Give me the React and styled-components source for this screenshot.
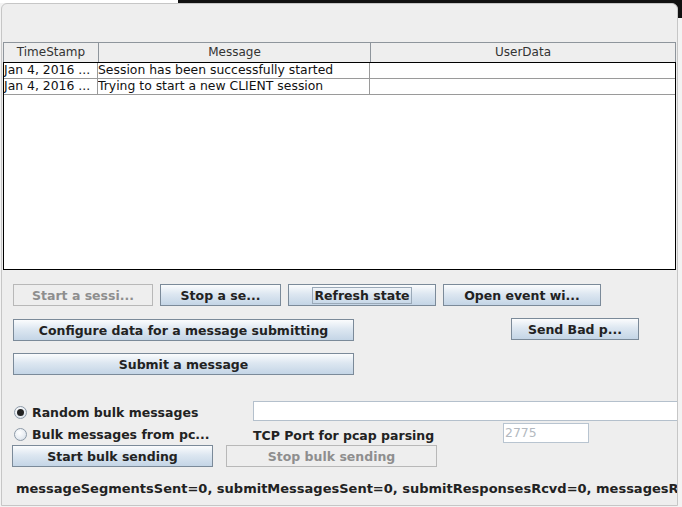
import React from "react"
import styled, { createGlobalStyle } from "styled-components"

const GlobalStyle = createGlobalStyle`
  html, body {
    margin: 0;
    padding: 0;
    background: #f2f2f2;
  }
  body {
    font-family: "DejaVu Sans", "Liberation Sans", sans-serif;
  }
`

const Desktop = styled.div`
  width: 682px;
  height: 507px;
  overflow: hidden;
  box-sizing: border-box;
  padding: 3px 0 0 1px;
  background:
    linear-gradient(#ffffff, #ffffff) 0 0 / 178px 3px no-repeat,
    linear-gradient(#111111, #111111) 178px 0 / 504px 18px no-repeat,
    #f3f3f3;
`

const Window = styled.div`
  width: 677px;
  height: 503px;
  box-sizing: border-box;
  background: #eeeeee;
  border: 1px solid #c6c6c6;
  border-radius: 6px 6px 0 0;
  padding: 38px 0 0 1px;
  overflow: hidden;
  color: #222;
`

const TableBox = styled.div`
  width: 673px;
`

const HeaderRow = styled.div`
  display: grid;
  grid-template-columns: 95px 272px 1fr;
  height: 20px;
  box-sizing: border-box;
  border: 1px solid #8e959c;
  border-bottom: none;
  background: #eeeeee;
`

const HeaderCell = styled.div`
  font-size: 12px;
  line-height: 19px;
  text-align: center;
  border-right: ${(p) => (p.$last ? "none" : "1px solid #8e959c")};
  color: #333;
`

const Body = styled.div`
  height: 208px;
  box-sizing: border-box;
  border: 1px solid #000;
  background: #ffffff;
`

const Row = styled.div`
  display: grid;
  grid-template-columns: 94px 272px 1fr;
  height: 16px;
  box-sizing: border-box;
  border-bottom: 1px solid #9a9a9a;
`

const Cell = styled.div`
  font-size: 12.4px;
  line-height: 14px;
  white-space: nowrap;
  overflow: hidden;
  color: #111;
  border-right: ${(p) => (p.$last ? "none" : "1px solid #9a9a9a")};
`

const Controls = styled.div`
  display: flex;
  flex-direction: column;
  padding-left: 10px;
`

const ButtonRow = styled.div`
  display: flex;
  align-items: ${(p) => p.$align ?? "center"};
  gap: ${(p) => p.$gap ?? 7}px;
  margin-top: ${(p) => p.$top ?? 0}px;
`

const Button = styled.button`
  width: ${(p) => p.$w}px;
  height: 22px;
  margin-left: ${(p) => p.$ml ?? 0}px;
  margin-top: ${(p) => p.$mt ?? 0}px;
  padding: 0;
  box-sizing: border-box;
  flex-shrink: 0;
  font-family: "DejaVu Sans", sans-serif;
  font-size: 12.5px;
  font-weight: bold;
  color: #222;
  white-space: nowrap;
  border: 1px solid #7b8a99;
  border-radius: 0;
  background: linear-gradient(#fbfcfd 0%, #dde7f1 45%, #c4d5e6 100%);
  cursor: default;

  &:disabled {
    color: #8e8e8e;
    border-color: #b8b8b8;
    background: #eeeeee;
  }
`

const FocusText = styled.span`
  border: 1px solid #9aa9b8;
  padding: 0 1px;
`

const BulkSection = styled.div`
  display: grid;
  grid-template-columns: 240px 250px 1fr;
  grid-template-rows: 22px 22px;
  align-items: center;
  margin-top: 26px;
`

const RadioLabel = styled.label`
  display: flex;
  align-items: center;
  gap: 5px;
  padding-left: 1px;
  font-size: 12.5px;
  font-weight: bold;
  color: #222;
  white-space: nowrap;
`

const RadioDot = styled.span`
  width: 13px;
  height: 13px;
  border-radius: 50%;
  box-sizing: border-box;
  border: 1px solid #8d9aa8;
  background: radial-gradient(circle at 40% 35%, #ffffff 0%, #e6ebf1 60%, #c9d3dd 100%);
  display: flex;
  align-items: center;
  justify-content: center;

  &::after {
    content: "";
    width: 7px;
    height: 7px;
    border-radius: 50%;
    background: #222;
    display: ${(p) => (p.$on ? "block" : "none")};
  }
`

const TextField = styled.div`
  grid-column: 2 / 4;
  align-self: start;
  height: 20px;
  width: 440px;
  box-sizing: border-box;
  background: #ffffff;
  border: 1px solid #b4c0cc;
  border-right: none;
`

const PortField = styled.div`
  align-self: start;
  width: 86px;
  height: 20px;
  box-sizing: border-box;
  background: #ffffff;
  border: 1px solid #b8c4d0;
  font-size: 12.4px;
  line-height: 18px;
  padding-left: 1px;
  color: #b3b9c0;
`

const FieldLabel = styled.div`
  font-size: 12.5px;
  font-weight: bold;
  color: #222;
  white-space: nowrap;
  margin-top: 3px;
`

const Status = styled.div`
  font-size: 13px;
  font-weight: bold;
  color: #222;
  white-space: nowrap;
  margin: 14px 0 0 3px;
`

const rows = [
  ["Jan 4, 2016 ...", "Session has been successfully started", ""],
  ["Jan 4, 2016 ...", "Trying to start a new CLIENT session", ""],
]

export default function App() {
  return (
    <>
      <GlobalStyle />
      <Desktop>
        <Window>
          <TableBox>
            <HeaderRow>
              <HeaderCell>TimeStamp</HeaderCell>
              <HeaderCell>Message</HeaderCell>
              <HeaderCell $last>UserData</HeaderCell>
            </HeaderRow>
            <Body>
              {rows.map((r, i) => (
                <Row key={i}>
                  <Cell>{r[0]}</Cell>
                  <Cell>{r[1]}</Cell>
                  <Cell $last>{r[2]}</Cell>
                </Row>
              ))}
            </Body>
          </TableBox>

          <Controls>
            <ButtonRow $top={14}>
              <Button $w={140} disabled>Start a sessi...</Button>
              <Button $w={121}>Stop a se...</Button>
              <Button $w={148}>
                <FocusText>Refresh state</FocusText>
              </Button>
              <Button $w={158}>Open event wi...</Button>
            </ButtonRow>

            <ButtonRow $top={12} $gap={0} $align="flex-start">
              <Button $w={341} $mt={1}>Configure data for a message submitting</Button>
              <Button $w={128} $ml={157}>Send Bad p...</Button>
            </ButtonRow>

            <ButtonRow $top={12}>
              <Button $w={341}>Submit a message</Button>
            </ButtonRow>

            <BulkSection>
              <RadioLabel>
                <RadioDot $on />
                Random bulk messages
              </RadioLabel>
              <TextField />
              <RadioLabel>
                <RadioDot />
                Bulk messages from pc...
              </RadioLabel>
              <FieldLabel>TCP Port for pcap parsing</FieldLabel>
              <PortField>2775</PortField>
            </BulkSection>

            <ButtonRow $top={0} $gap={13}>
              <Button $w={201} $ml={-1}>Start bulk sending</Button>
              <Button $w={211} disabled>Stop bulk sending</Button>
            </ButtonRow>

            <Status>
              messageSegmentsSent=0, submitMessagesSent=0, submitResponsesRcvd=0, messagesRcvd=0
            </Status>
          </Controls>
        </Window>
      </Desktop>
    </>
  )
}
